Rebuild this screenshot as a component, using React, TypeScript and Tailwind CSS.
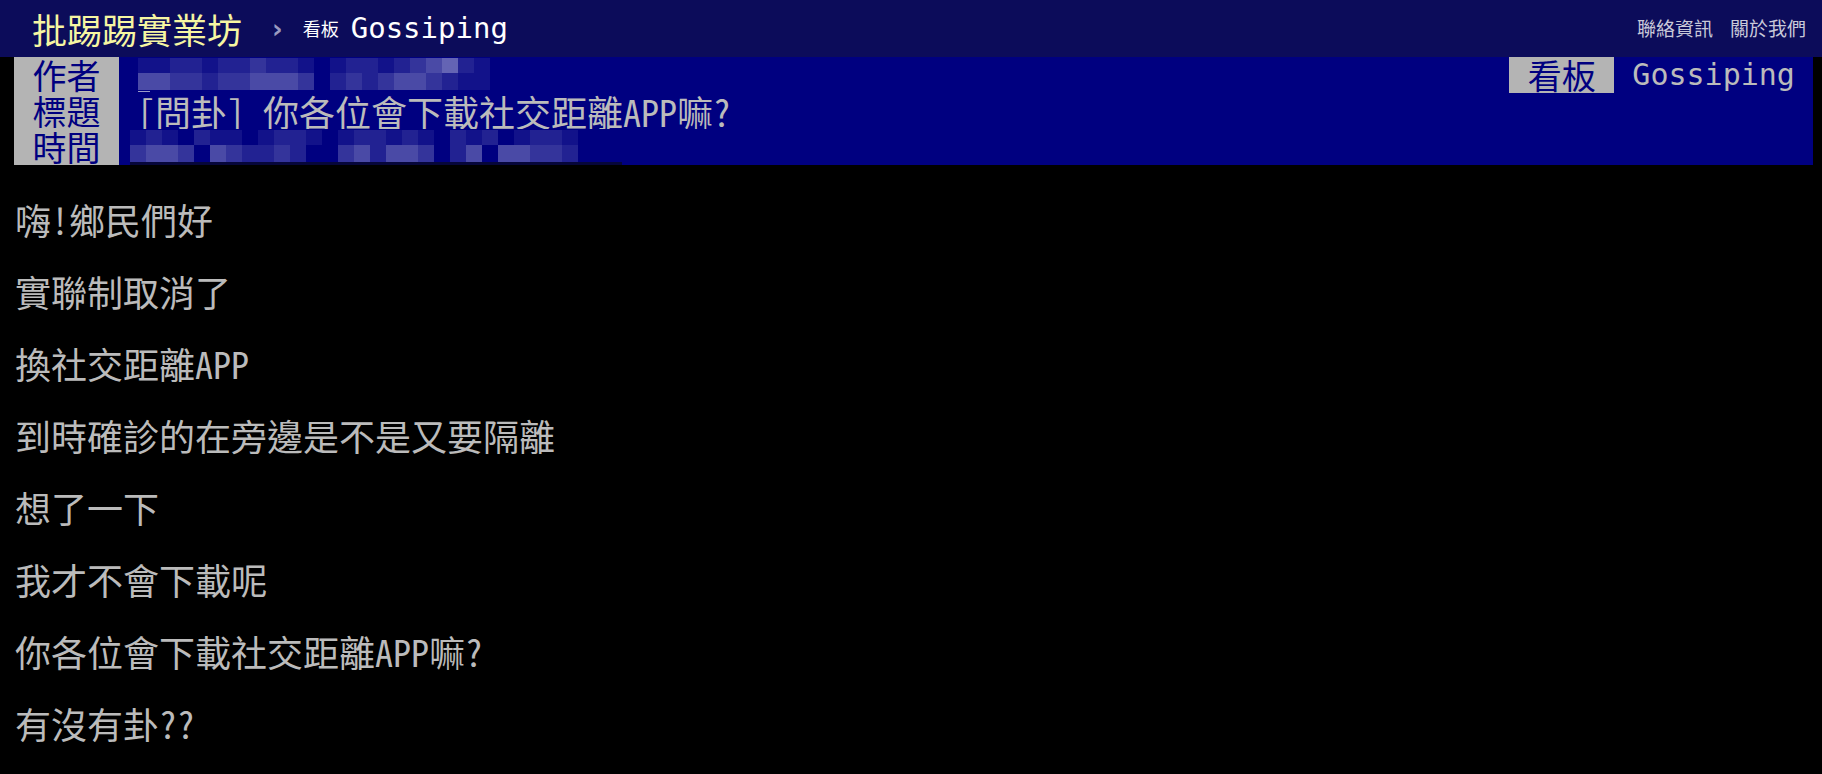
const CJK = "font-['Noto_Sans_CJK_TC','Noto_Sans_CJK_JP',sans-serif]";
const MONO = "font-['DejaVu_Sans_Mono','Liberation_Mono',monospace]";

const SHADES = ['#000080', '#12128a', '#222292', '#34349b', '#4a4aa6', '#6464b4'];

// splits ascii runs out so they render half-width like the terminal font
function Mixed({ text }: { text: string }) {
  const parts = text.match(/[\x20-\x7e]+|[^\x20-\x7e]+/g) || [];
  return (
    <>
      {parts.map((p, i) =>
        /^[\x20-\x7e]+$/.test(p) ? (
          <span key={i} className="[font-feature-settings:'hwid']">
            {p}
          </span>
        ) : (
          <span key={i}>{p}</span>
        )
      )}
    </>
  );
}

// pixelated (censored) block, drawn as a grid of squares
function Mosaic({ rows, width, strip }: { rows: string[]; width: number; strip?: number }) {
  return (
    <svg width={width} height={36} className="block shrink-0">
      {rows.map((row, r) =>
        row.split('').map((c, i) => (
          <rect key={`${r}-${i}`} x={i * 16} y={r === 0 ? 1 : 16} width={16} height={r === 0 ? 15 : 17} fill={SHADES[Number(c)]} />
        ))
      )}
      {strip ? <rect x={0} y={33} width={strip} height={3} fill="#06063a" /> : <rect x={0} y={34} width={12} height={1} fill="#9a9ac8" />}
    </svg>
  );
}

const lines = [
  '嗨!鄉民們好',
  '實聯制取消了',
  '換社交距離APP',
  '到時確診的在旁邊是不是又要隔離',
  '想了一下',
  '我才不會下載呢',
  '你各位會下載社交距離APP嘛?',
  '有沒有卦??',
];

export default function App() {
  return (
    <div className={`min-h-screen bg-black overflow-hidden ${CJK}`}>
      {/* Top bar */}
      <div className="h-[57px] bg-[#0c0c5a] flex items-center justify-between pl-[32px] pr-[16px]">
        <div className="flex items-center">
          <span className="text-[35px] leading-none text-[#f6f6a2]">批踢踢實業坊</span>
          <span className="ml-[30px] text-[26px] leading-none font-bold text-[#9a9ac0] font-['DejaVu_Sans',sans-serif]">›</span>
          <span className="ml-[20px] text-[18px] text-white">看板</span>
          <span className={`ml-[12px] text-[29px] leading-none text-white ${MONO}`}>Gossiping</span>
        </div>
        <div className="flex items-center gap-[17px] text-[19px] text-[#c8c8d8]">
          <span>聯絡資訊</span>
          <span>關於我們</span>
        </div>
      </div>

      {/* Article meta */}
      <div className="pl-[14px] pr-[9px] text-[36px] leading-[36px]">
        <div className="flex h-[36px]">
          <div className="w-[105px] shrink-0 bg-[#b4b4b4] text-[#000080] text-[34px] text-center">作者</div>
          <div className="flex-1 bg-[#000080] pl-[19px]">
            <Mosaic rows={['11221223221012212345210', '44332334443023234432110']} width={368} />
          </div>
          <div className="w-[105px] shrink-0 bg-[#b4b4b4] text-[#000080] text-[34px] text-center">看板</div>
          <div className={`bg-[#000080] text-[#bbbbbb] whitespace-pre ${MONO} text-[30px]`}> Gossiping </div>
        </div>
        <div className="flex h-[36px]">
          <div className="w-[105px] shrink-0 bg-[#b4b4b4] text-[#000080] text-[34px] text-center">標題</div>
          <div className="flex-1 bg-[#000080] text-[#bbbbbb] whitespace-pre">
            <Mixed text=" [問卦] 你各位會下載社交距離APP嘛?" />
          </div>
        </div>
        <div className="flex h-[36px]">
          <div className="w-[105px] shrink-0 bg-[#b4b4b4] text-[#000080] text-[34px] text-center">時間</div>
          <div className="flex-1 bg-[#000080] pl-[11px]">
            <Mosaic rows={['1210211012210122121021201221', '3443043223200342443024044332']} width={492} strip={492} />
          </div>
        </div>
      </div>

      {/* Article body */}
      <div className="pl-[15px] pt-[36px] text-[36px] leading-[36px] text-[#bbbbbb]">
        {lines.map((l, i) => (
          <div key={i} className="h-[36px] mb-[36px] whitespace-pre">
            <Mixed text={l} />
          </div>
        ))}
      </div>
    </div>
  );
}
